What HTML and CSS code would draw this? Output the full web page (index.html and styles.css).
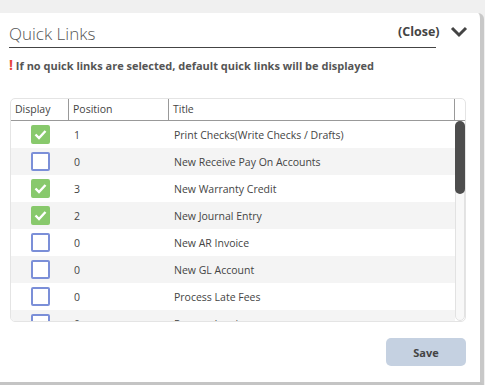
FILE: index.html
```html
<!DOCTYPE html>
<html lang="en">
<head>
    <meta charset="UTF-8">
    <title>Quick Links</title>
    <link rel="stylesheet" href="styles.css">
</head>
<body>
<div class="panel">
    <div class="panel-header">
        <h2 class="panel-title">Quick Links</h2>
        <a class="close-link">(Close)</a>
        <svg class="chevron" width="18" height="12" viewBox="0 0 18 12">
            <path d="M2 2 L9 9 L16 2" fill="none" stroke="#444" stroke-width="3"/>
        </svg>
    </div>

    <div class="notice"><span class="bang">!</span> If no quick links are selected, default quick links will be displayed</div>

    <div class="grid">
        <div class="grid-head">
            <div class="cell">Display</div>
            <div class="cell">Position</div>
            <div class="cell">Title</div>
            <div class="cell"></div>
        </div>
        <div class="grid-main">
            <div class="grid-body" id="grid-body"></div>
            <div class="scrollbar"><div class="scroll-thumb"></div></div>
        </div>
    </div>

    <div class="actions">
        <button class="btn-save">Save</button>
    </div>
</div>

<script>
    const links = [
        { on: true, pos: 1, title: 'Print Checks(Write Checks / Drafts)' },
        { on: false, pos: 0, title: 'New Receive Pay On Accounts' },
        { on: true, pos: 3, title: 'New Warranty Credit' },
        { on: true, pos: 2, title: 'New Journal Entry' },
        { on: false, pos: 0, title: 'New AR Invoice' },
        { on: false, pos: 0, title: 'New GL Account' },
        { on: false, pos: 0, title: 'Process Late Fees' },
        { on: false, pos: 0, title: 'Process Invoices' }
    ];

    const body = document.getElementById('grid-body');
    links.forEach((link) => {
        const row = document.createElement('div');
        row.className = 'grid-row';
        row.innerHTML =
            `<div class="cell cell-check"><span class="check ${link.on ? 'checked' : ''}">` +
            (link.on ? '<svg width="13" height="11" viewBox="0 0 13 11"><path d="M1.5 5.5 L5 9 L11.5 2" fill="none" stroke="#fff" stroke-width="2.4"/></svg>' : '') +
            `</span></div><div class="cell">${link.pos}</div><div class="cell">${link.title}</div>`;
        body.appendChild(row);
    });
</script>
</body>
</html>
```

FILE: styles.css
```css
* {
    margin: 0;
    padding: 0;
    box-sizing: border-box;
}

body {
    font-family: 'Open Sans', 'Noto Sans', sans-serif;
    background: #f0f0f0;
    color: #444;
    width: 485px;
    height: 385px;
    overflow: hidden;
}

.panel {
    margin-top: 13px;
    width: 484px;
    height: 372px;
    background: white;
    border-top-right-radius: 6px;
    border-right: 4px solid #c8c8c8;
    border-bottom: 3px solid #c4c4c4;
    padding: 0 0 0 9px;
}

.panel-header {
    display: flex;
    align-items: center;
    height: 35px;
    padding-top: 6px;
}

.panel-title {
    width: 427px;
    font-size: 17px;
    font-weight: 300;
    color: #555;
    line-height: 27px;
    border-bottom: 1px solid #444;
}

.close-link {
    margin-left: -38px;
    margin-top: -4px;
    font-size: 12.5px;
    font-weight: 700;
    color: #444;
}

.chevron {
    margin-left: 10px;
    margin-top: -4px;
}

.notice {
    margin-top: 10px;
    font-size: 11px;
    font-weight: 700;
    color: #555;
    line-height: 14px;
}

.bang {
    color: #e8453c;
    font-size: 14px;
    font-weight: 700;
}

.grid {
    margin-top: 25px;
    width: 456px;
    margin-left: 1px;
    border: 1px solid #e4e4e4;
    border-radius: 5px;
    overflow: hidden;
    font-size: 10.5px;
}

.grid-head {
    display: grid;
    grid-template-columns: 58px 100px 286px 10px;
    height: 22px;
    border-bottom: 1px solid #999;
}

.grid-head .cell {
    border-right: 1px solid #999;
    padding: 0 4px;
    line-height: 21px;
    color: #444;
}

.grid-head .cell:last-child {
    border-right: none;
}

.grid-main {
    display: flex;
    height: 200px;
}

.grid-body {
    width: 444px;
    overflow: hidden;
}

.scrollbar {
    width: 10px;
    background: #f8f8f8;
    border: 1px solid #e2e2e2;
    border-radius: 5px;
}

.scroll-thumb {
    height: 73px;
    margin: -1px;
    background: #4d4d4d;
    border-radius: 5px;
}

.grid-row {
    display: grid;
    grid-template-columns: 58px 100px 286px;
    height: 27px;
    align-items: center;
}

.grid-row:nth-child(even) {
    background: #f4f4f4;
}

.grid-row .cell {
    padding: 0 5px;
    color: #444;
}

.cell-check {
    display: flex;
    justify-content: center;
}

.check {
    width: 19px;
    height: 19px;
    border: 2px solid #7b8fd8;
    border-radius: 2px;
    background: white;
    display: flex;
    align-items: center;
    justify-content: center;
}

.check.checked {
    background: #88c96c;
    border-color: #88c96c;
}

.actions {
    display: flex;
    justify-content: flex-end;
    padding-right: 14px;
    margin-top: 16px;
}

.btn-save {
    width: 80px;
    height: 28px;
    background: #c5d1e1;
    border: none;
    border-radius: 5px;
    font-family: 'Open Sans', sans-serif;
    font-size: 11px;
    font-weight: 700;
    color: #444;
}
```
